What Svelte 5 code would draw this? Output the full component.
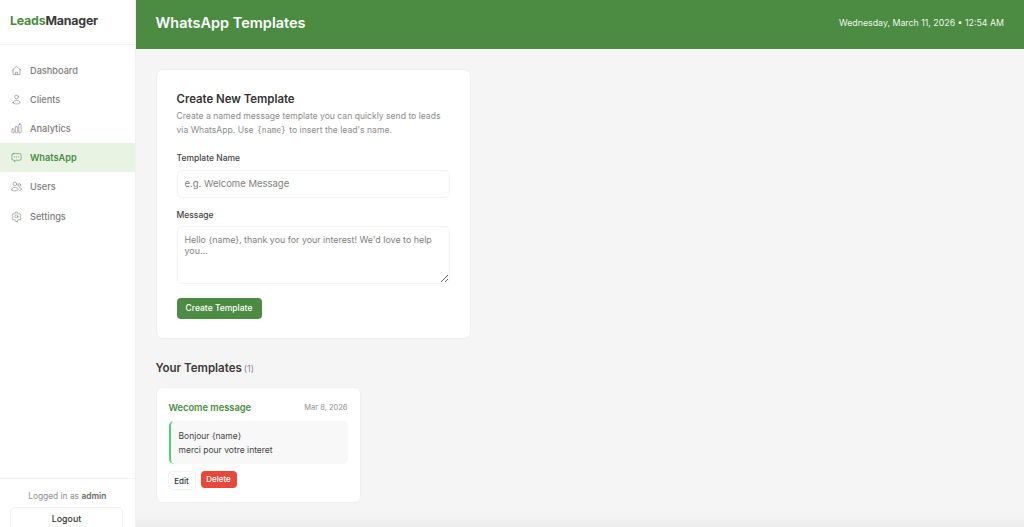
<script>
  const nav = [
    { label: 'Dashboard', icon: 'home' },
    { label: 'Clients', icon: 'user' },
    { label: 'Analytics', icon: 'chart' },
    { label: 'WhatsApp', icon: 'chat', active: true },
    { label: 'Users', icon: 'users' },
    { label: 'Settings', icon: 'gear' }
  ];
</script>

<div class="layout">
  <aside class="sidebar">
    <div class="brand"><span class="lead">Leads</span>Manager</div>
    <nav class="nav">
      {#each nav as item}
        <div class="item" class:active={item.active}>
          <svg class="icon" viewBox="0 0 24 24" fill="none" stroke="currentColor" stroke-width="1.3" stroke-linecap="round" stroke-linejoin="round">
            {#if item.icon === 'home'}
              <path d="M2.500 11.500 12 3l9.500 8.500" /><path d="M4.500 10v11h15V10" /><path d="M10 21v-5.500h4V21" />
            {:else if item.icon === 'user'}
              <circle cx="12" cy="6.500" r="4" /><path d="M4.500 18.500c0-2.800 3.300-4.500 7.500-4.500s7.500 1.700 7.500 4.500c0 2-3.300 3.200-7.500 3.200s-7.500-1.200-7.500-3.200z" />
            {:else if item.icon === 'chart'}
              <rect x="2" y="13" width="5" height="8.500" rx="1.500" /><rect x="9.500" y="8" width="5" height="13.500" rx="1.500" /><rect x="17" y="2.500" width="5" height="19" rx="1.500" />
            {:else if item.icon === 'chat'}
              <path d="M5 3.500h14a3 3 0 0 1 3 3v8.500a3 3 0 0 1-3 3h-7.500L7.500 21.500V18H5a3 3 0 0 1-3-3V6.500a3 3 0 0 1 3-3z" /><path d="M8 10.800h.01M12 10.800h.01M16 10.800h.01" stroke-width="2" />
            {:else if item.icon === 'users'}
              <circle cx="8.500" cy="6.500" r="4" /><path d="M1.500 19c0-3.200 3-5 7-5s7 1.800 7 5c0 1.700-3 2.500-7 2.500s-7-.8-7-2.500z" /><circle cx="18" cy="8.500" r="2.800" /><path d="M18.500 14c2.500.3 4 1.800 4 4 0 1.500-1.500 2.300-3.500 2.500" />
            {:else}
              <circle cx="12" cy="12" r="3.200" /><path d="M10 2.500h4l.7 2.800 2.500 1.400 2.800-.8 2 3.500-2.100 2v2.600l2.100 2-2 3.500-2.800-.8-2.500 1.400-.7 2.800h-4l-.7-2.800-2.500-1.400-2.800.8-2-3.500 2.100-2v-2.600L2 9.400l2-3.500 2.800.8 2.500-1.400z" />
            {/if}
          </svg>
          <span>{item.label}</span>
        </div>
      {/each}
    </nav>
    <div class="foot">
      <div class="logged">Logged in as <b>admin</b></div>
      <button class="logout">Logout</button>
    </div>
  </aside>

  <main class="main">
    <header class="top">
      <h1>WhatsApp Templates</h1>
      <div class="date">Wednesday, March 11, 2026 • 12:54 AM</div>
    </header>
    <div class="content">
      <section class="card form">
        <h2>Create New Template</h2>
        <p class="desc">Create a named message template you can quickly send to leads via WhatsApp. Use <code>{'{name}'}</code> to insert the lead's name.</p>
        <label class="lab" for="tn">Template Name</label>
        <input id="tn" class="field" placeholder="e.g. Welcome Message" />
        <label class="lab msg" for="tm">Message</label>
        <textarea id="tm" class="field area" placeholder={"Hello {name}, thank you for your interest! We'd love to help you..."}></textarea>
        <button class="create">Create Template</button>
      </section>

      <h3 class="yours">Your Templates <span>(1)</span></h3>

      <section class="card tpl">
        <div class="tpl-head">
          <span class="tpl-name">Wecome message</span>
          <span class="tpl-date">Mar 8, 2026</span>
        </div>
        <div class="quote">Bonjour {'{name}'}<br />merci pour votre interet</div>
        <div class="actions">
          <button class="edit">Edit</button>
          <button class="del">Delete</button>
        </div>
      </section>
    </div>
    <div class="fade"></div>
  </main>
</div>

<style>
  :global(body) {
    margin: 0;
    overflow: hidden;
    background: #f5f5f5;
  }
  .layout {
    display: flex;
    height: 527px;
    overflow: hidden;
    font-family: Inter, "Liberation Sans", sans-serif;
    color: #2b2b2b;
  }
  .sidebar {
    width: 135.500px;
    flex: none;
    box-sizing: border-box;
    background: #fff;
    border-right: 1px solid #f0f0f0;
    display: flex;
    flex-direction: column;
    height: 527px;
  }
  .brand {
    height: 45px;
    box-sizing: border-box;
    padding: 13px 10px 0;
    font-size: 12.400px;
    line-height: 16px;
    font-weight: 700;
    letter-spacing: -0.2px;
    color: #3a3a3a;
    border-bottom: 1px solid #f3f3f3;
  }
  .lead { color: #4c8c42; }
  .nav {
    padding-top: 10.500px;
    flex: 1;
  }
  .item {
    height: 29.200px;
    display: flex;
    align-items: center;
    gap: 8px;
    padding-left: 11px;
    font-size: 9.200px;
    font-weight: 500;
    color: #7d7d7d;
  }
  .item.active {
    background: #e8f3e4;
    color: #4c8c42;
    font-weight: 600;
  }
  .icon { width: 11px; height: 11px; flex: none; }
  .foot {
    border-top: 1px solid #f3f3f3;
    height: 49px;
    box-sizing: border-box;
    padding: 11px 10px 0;
    text-align: center;
  }
  .logged {
    font-size: 8.400px;
    line-height: 12px;
    color: #8f8f8f;
  }
  .logged b { color: #6a6a6a; font-weight: 600; }
  .logout {
    display: block;
    width: 113px;
    height: 23px;
    margin-top: 4.500px;
    box-sizing: border-box;
    background: #fff;
    border: 1px solid #f0f0f0;
    border-radius: 5px;
    padding: 0;
    font: 500 8.800px Inter, sans-serif;
    color: #333;
  }
  .main {
    flex: 1;
    min-width: 0;
    position: relative;
    background: #f5f5f5;
  }
  .top {
    height: 49px;
    box-sizing: border-box;
    background: #4c8c42;
    display: flex;
    align-items: center;
    justify-content: space-between;
    padding: 0 20px 4px;
    color: #fff;
  }
  h1 {
    margin: 0;
    font-size: 14.500px;
    font-weight: 600;
  }
  .date {
    font-size: 8.800px;
    color: #edf5ea;
  }
  .content { padding: 20px 20px 0; }
  .card {
    background: #fff;
    border: 1px solid #f0f0f0;
    border-radius: 7px;
    box-sizing: border-box;
  }
  .form {
    width: 315px;
    height: 270px;
    padding: 22px 20px 0;
  }
  h2 {
    margin: 0;
    font-size: 11.400px;
    line-height: 15px;
    font-weight: 600;
    color: #333;
  }
  .desc {
    margin: 3px 0 0;
    font-size: 8.600px;
    line-height: 13.500px;
    color: #8c8c8c;
  }
  code {
    font-family: "DejaVu Sans Mono", monospace;
    font-size: 8px;
    padding: 0 1px;
  }
  .lab {
    display: block;
    margin-top: 15px;
    font-size: 8.500px;
    line-height: 12px;
    font-weight: 500;
    color: #444;
  }
  .msg { margin-top: 11px; }
  .field {
    display: block;
    width: 100%;
    height: 28px;
    margin-top: 5.500px;
    box-sizing: border-box;
    border: 1px solid #f3f3f3;
    border-radius: 5px;
    padding: 0 7px;
    font-family: Inter, sans-serif;
    font-size: 9.500px;
    background: #fff;
    outline: none;
  }
  .field::placeholder { color: #808080; opacity: 1; }
  .area {
    height: 58px;
    padding: 7px 7px;
    line-height: 11px;
    font-size: 8.900px;
  }
  .create {
    display: block;
    margin-top: 13.500px;
    width: 85px;
    height: 21px;
    padding: 0;
    background: #4c8c42;
    color: #fff;
    border: 0;
    border-radius: 4px;
    font: 500 8.500px Inter, sans-serif;
  }
  .yours {
    margin: 21px 0 10px;
    font-size: 11.500px;
    line-height: 16px;
    font-weight: 600;
    color: #3a3a3a;
  }
  .yours span { font-size: 9px; font-weight: 400; color: #8a8a8a; margin-left: -1px; }
  .tpl {
    width: 205px;
    height: 116px;
    padding: 13px 12px 0;
  }
  .tpl-head {
    display: flex;
    justify-content: space-between;
    align-items: center;
    height: 13px;
  }
  .tpl-name {
    font-size: 9.300px;
    font-weight: 600;
    color: #4c8c42;
  }
  .tpl-date { font-size: 7.500px; color: #8f8f8f; }
  .quote {
    margin-top: 7px;
    height: 43px;
    box-sizing: border-box;
    padding: 8px 8px;
    background: #f8f8f8;
    border-left: 2px solid #4fd07a;
    border-radius: 5px;
    font-size: 8.500px;
    line-height: 14px;
    color: #444;
  }
  .actions {
    display: flex;
    align-items: flex-start;
    gap: 5px;
    margin-top: 7px;
    margin-left: -1px;
  }
  .actions button {
    padding: 0;
    border-radius: 4px;
    font: 500 8px Inter, sans-serif;
  }
  .edit {
    width: 28px;
    height: 19px;
    background: #fff;
    border: 1px solid #f3f3f3;
    color: #333;
  }
  .del {
    width: 36px;
    height: 16.500px;
    background: #e8483c;
    border: 0;
    color: #fff;
  }
  .fade {
    position: absolute;
    left: 0;
    right: 0;
    bottom: 0;
    height: 14px;
    background: linear-gradient(rgba(0, 0, 0, 0), rgba(0, 0, 0, 0.035));
    pointer-events: none;
  }
</style>
